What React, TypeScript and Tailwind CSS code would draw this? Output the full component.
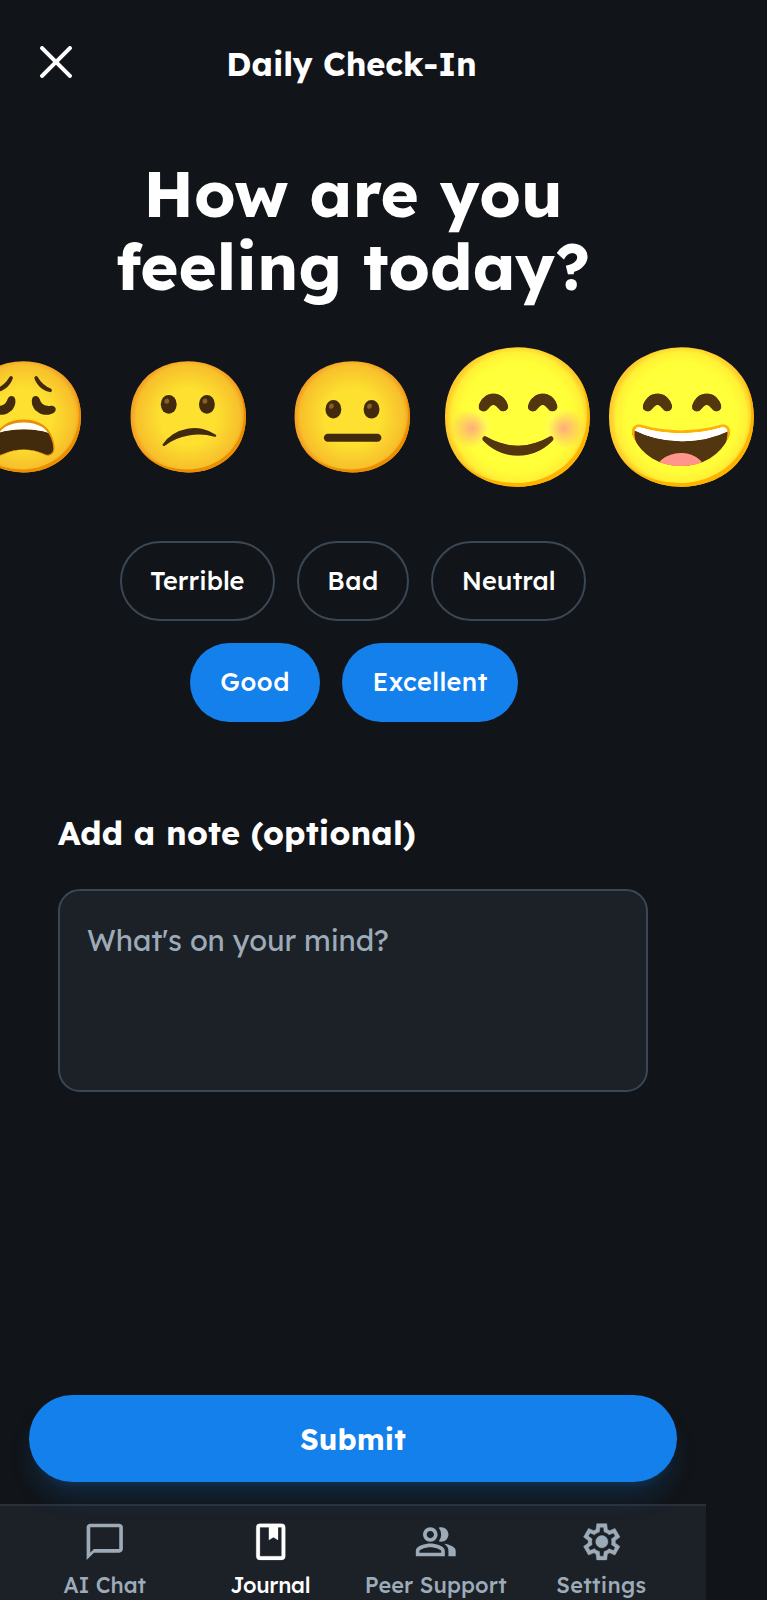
import React from "react";
import { MdChatBubbleOutline, MdOutlinePeopleAlt } from "react-icons/md";

const moods = [
  { emoji: "😩", active: false },
  { emoji: "😕", active: false },
  { emoji: "😐", active: false },
  { emoji: "😊", active: true },
  { emoji: "😄", active: true },
];

const pillRows = [
  {
    offset: "",
    pills: [
      { label: "Terrible", size: "w-[155.5px] tracking-[0.06px]", active: false },
      { label: "Bad", size: "w-[112.5px] tracking-[0.5px]", active: false },
      { label: "Neutral", size: "w-[155.5px] tracking-[0.05px]", active: false },
    ],
  },
  {
    offset: "pl-[2px] pt-[1px]",
    pills: [
      { label: "Good", size: "w-[130.5px] tracking-[0.6px]", active: true },
      { label: "Excellent", size: "w-[176px] tracking-[0.4px]", active: true },
    ],
  },
];

function CloseIcon() {
  return (
    <svg viewBox="0 0 32 32" className="size-8" fill="none" stroke="currentColor" strokeWidth="4.1" strokeLinecap="round">
      <path d="M2.1 2.1 29.9 29.9M29.9 2.1 2.1 29.9" />
    </svg>
  );
}

function BookIcon() {
  return (
    <svg viewBox="0 0 24 24" fill="currentColor" stroke="currentColor" strokeWidth="0.15" className="size-[43.5px]">
      <path
        fillRule="evenodd"
        d="M6 2h12a2 2 0 0 1 2 2v16a2 2 0 0 1-2 2H6a2 2 0 0 1-2-2V4a2 2 0 0 1 2-2Zm0 2v16h12V4h-2v7l-2.5-1.5L11 11V4Z"
      />
    </svg>
  );
}

function GearIcon() {
  return (
    <svg viewBox="0 0 24 24" fill="currentColor" stroke="currentColor" strokeWidth="0.25" className="size-[43.5px]">
      <path
        fillRule="evenodd"
        d="M9.25 22l-.4-3.2q-.325-.125-.612-.3t-.563-.375L4.7 19.375l-2.75-4.75l2.575-1.95Q4.5 12.5 4.5 12.337v-.675q0-.162.025-.337L1.95 9.375l2.75-4.75l2.975 1.25q.275-.2.575-.375t.6-.3l.4-3.2h5.5l.4 3.2q.325.125.613.3t.562.375l2.975-1.25l2.75 4.75l-2.575 1.95q.025.175.025.338v.674q0 .163-.05.338l2.575 1.95l-2.75 4.75l-2.95-1.25q-.275.2-.575.375t-.6.3l-.4 3.2ZM11 20h1.975l.35-2.65q.775-.2 1.438-.587t1.212-.938l2.475 1.025l.975-1.7l-2.15-1.625q.125-.35.175-.737T17.5 12t-.05-.787t-.175-.738l2.15-1.625l-.975-1.7l-2.475 1.05q-.55-.575-1.212-.962t-1.438-.588L13 4h-1.975l-.35 2.65q-.775.2-1.437.588t-1.213.937L5.55 7.15l-.975 1.7l2.15 1.6q-.125.375-.175.75t-.05.8q0 .4.05.775t.175.75l-2.15 1.625l.975 1.7l2.475-1.05q.55.575 1.213.963t1.437.587Z"
      />
      <circle cx="12.05" cy="12" r="3.4" />
    </svg>
  );
}

const tabs = [
  { label: "AI Chat", icon: <MdChatBubbleOutline className="size-[43.5px]" />, tone: "text-[#9dabb9] tracking-[-0.05px]" },
  { label: "Journal", icon: <BookIcon />, tone: "text-white tracking-[-0.3px]" },
  { label: "Peer Support", icon: <MdOutlinePeopleAlt className="size-[43.5px]" />, tone: "text-[#9dabb9] tracking-[0.1px]" },
  { label: "Settings", icon: <GearIcon />, tone: "text-[#9dabb9] tracking-[0.35px]" },
];

export default function App() {
  return (
    <div className="h-[1600px] w-full overflow-hidden bg-[#111418] font-['Lexend','Inter',sans-serif] text-white">
      <div className="flex h-full w-[706px] flex-col">
        <header className="flex h-[128px] shrink-0 items-center pr-[75px] pl-[40px]">
          <button aria-label="Close" className="mb-[5px]">
            <CloseIcon />
          </button>
          <h2 className="flex-1 text-center text-[32.6px] leading-[40px] font-bold tracking-[-0.05px]">Daily Check-In</h2>
        </header>

        <h1 className="mt-[29px] shrink-0 text-center text-[65.1px] leading-[72.5px] font-bold">
          How are you
          <br />
          feeling today?
        </h1>

        <div className="mt-[57.5px] -ml-px flex h-[108.6px] shrink-0 justify-center gap-[29.5px] text-[108.6px] leading-[108.6px]">
          {moods.map((m) => (
            <span key={m.emoji} className={m.active ? "block shrink-0 scale-[1.255] brightness-125" : "block shrink-0"}>
              {m.emoji}
            </span>
          ))}
        </div>

        <div className="mt-[73px] flex shrink-0 flex-col items-center gap-[21px]">
          {pillRows.map((row, i) => (
            <div key={i} className={`flex gap-[21.7px] ${row.offset}`}>
              {row.pills.map((p) => (
                <button
                  key={p.label}
                  className={`flex h-[79.5px] items-center justify-center rounded-full text-[25.3px] font-medium ${p.size} ${
                    p.active ? "bg-[#1480ec]" : "border-2 border-[#3b4754]"
                  }`}
                >
                  {p.label}
                </button>
              ))}
            </div>
          ))}
        </div>

        <div className="mt-[91px] flex shrink-0 flex-col px-[58px]">
          <h3 className="text-[32.6px] leading-[40px] font-bold tracking-[0.19px]">Add a note (optional)</h3>
          <textarea
            placeholder="What's on your mind?"
            className="mt-[35.5px] h-[203px] w-[590px] resize-none rounded-[22px] border-2 border-[#3b4754] bg-[#1c2027] px-[27px] pt-[28px] text-[29px] leading-[43.4px] tracking-[-0.1px] outline-none placeholder:text-[#9dabb9]"
          />
        </div>

        <div className="relative z-10 mt-auto shrink-0 px-[29px] pb-[22px]">
          <button className="h-[87px] w-full rounded-full bg-[#1480ec] pt-[2px] text-[29px] font-bold tracking-[0.15px] shadow-[0_18px_27px_-5px_rgba(20,128,236,0.2),0_7px_11px_-7px_rgba(20,128,236,0.2)]">
            Submit
          </button>
        </div>

        <nav className="grid h-24 shrink-0 grid-cols-4 border-t-2 border-[#283039] bg-[#1c2027] px-[22px] pt-[14px]">
          {tabs.map((t) => (
            <a key={t.label} className={`flex flex-col items-center ${t.tone}`}>
              {t.icon}
              <span className="mt-[7.5px] text-[21.7px] leading-[27px] font-medium whitespace-nowrap">{t.label}</span>
            </a>
          ))}
        </nav>
      </div>
    </div>
  );
}
